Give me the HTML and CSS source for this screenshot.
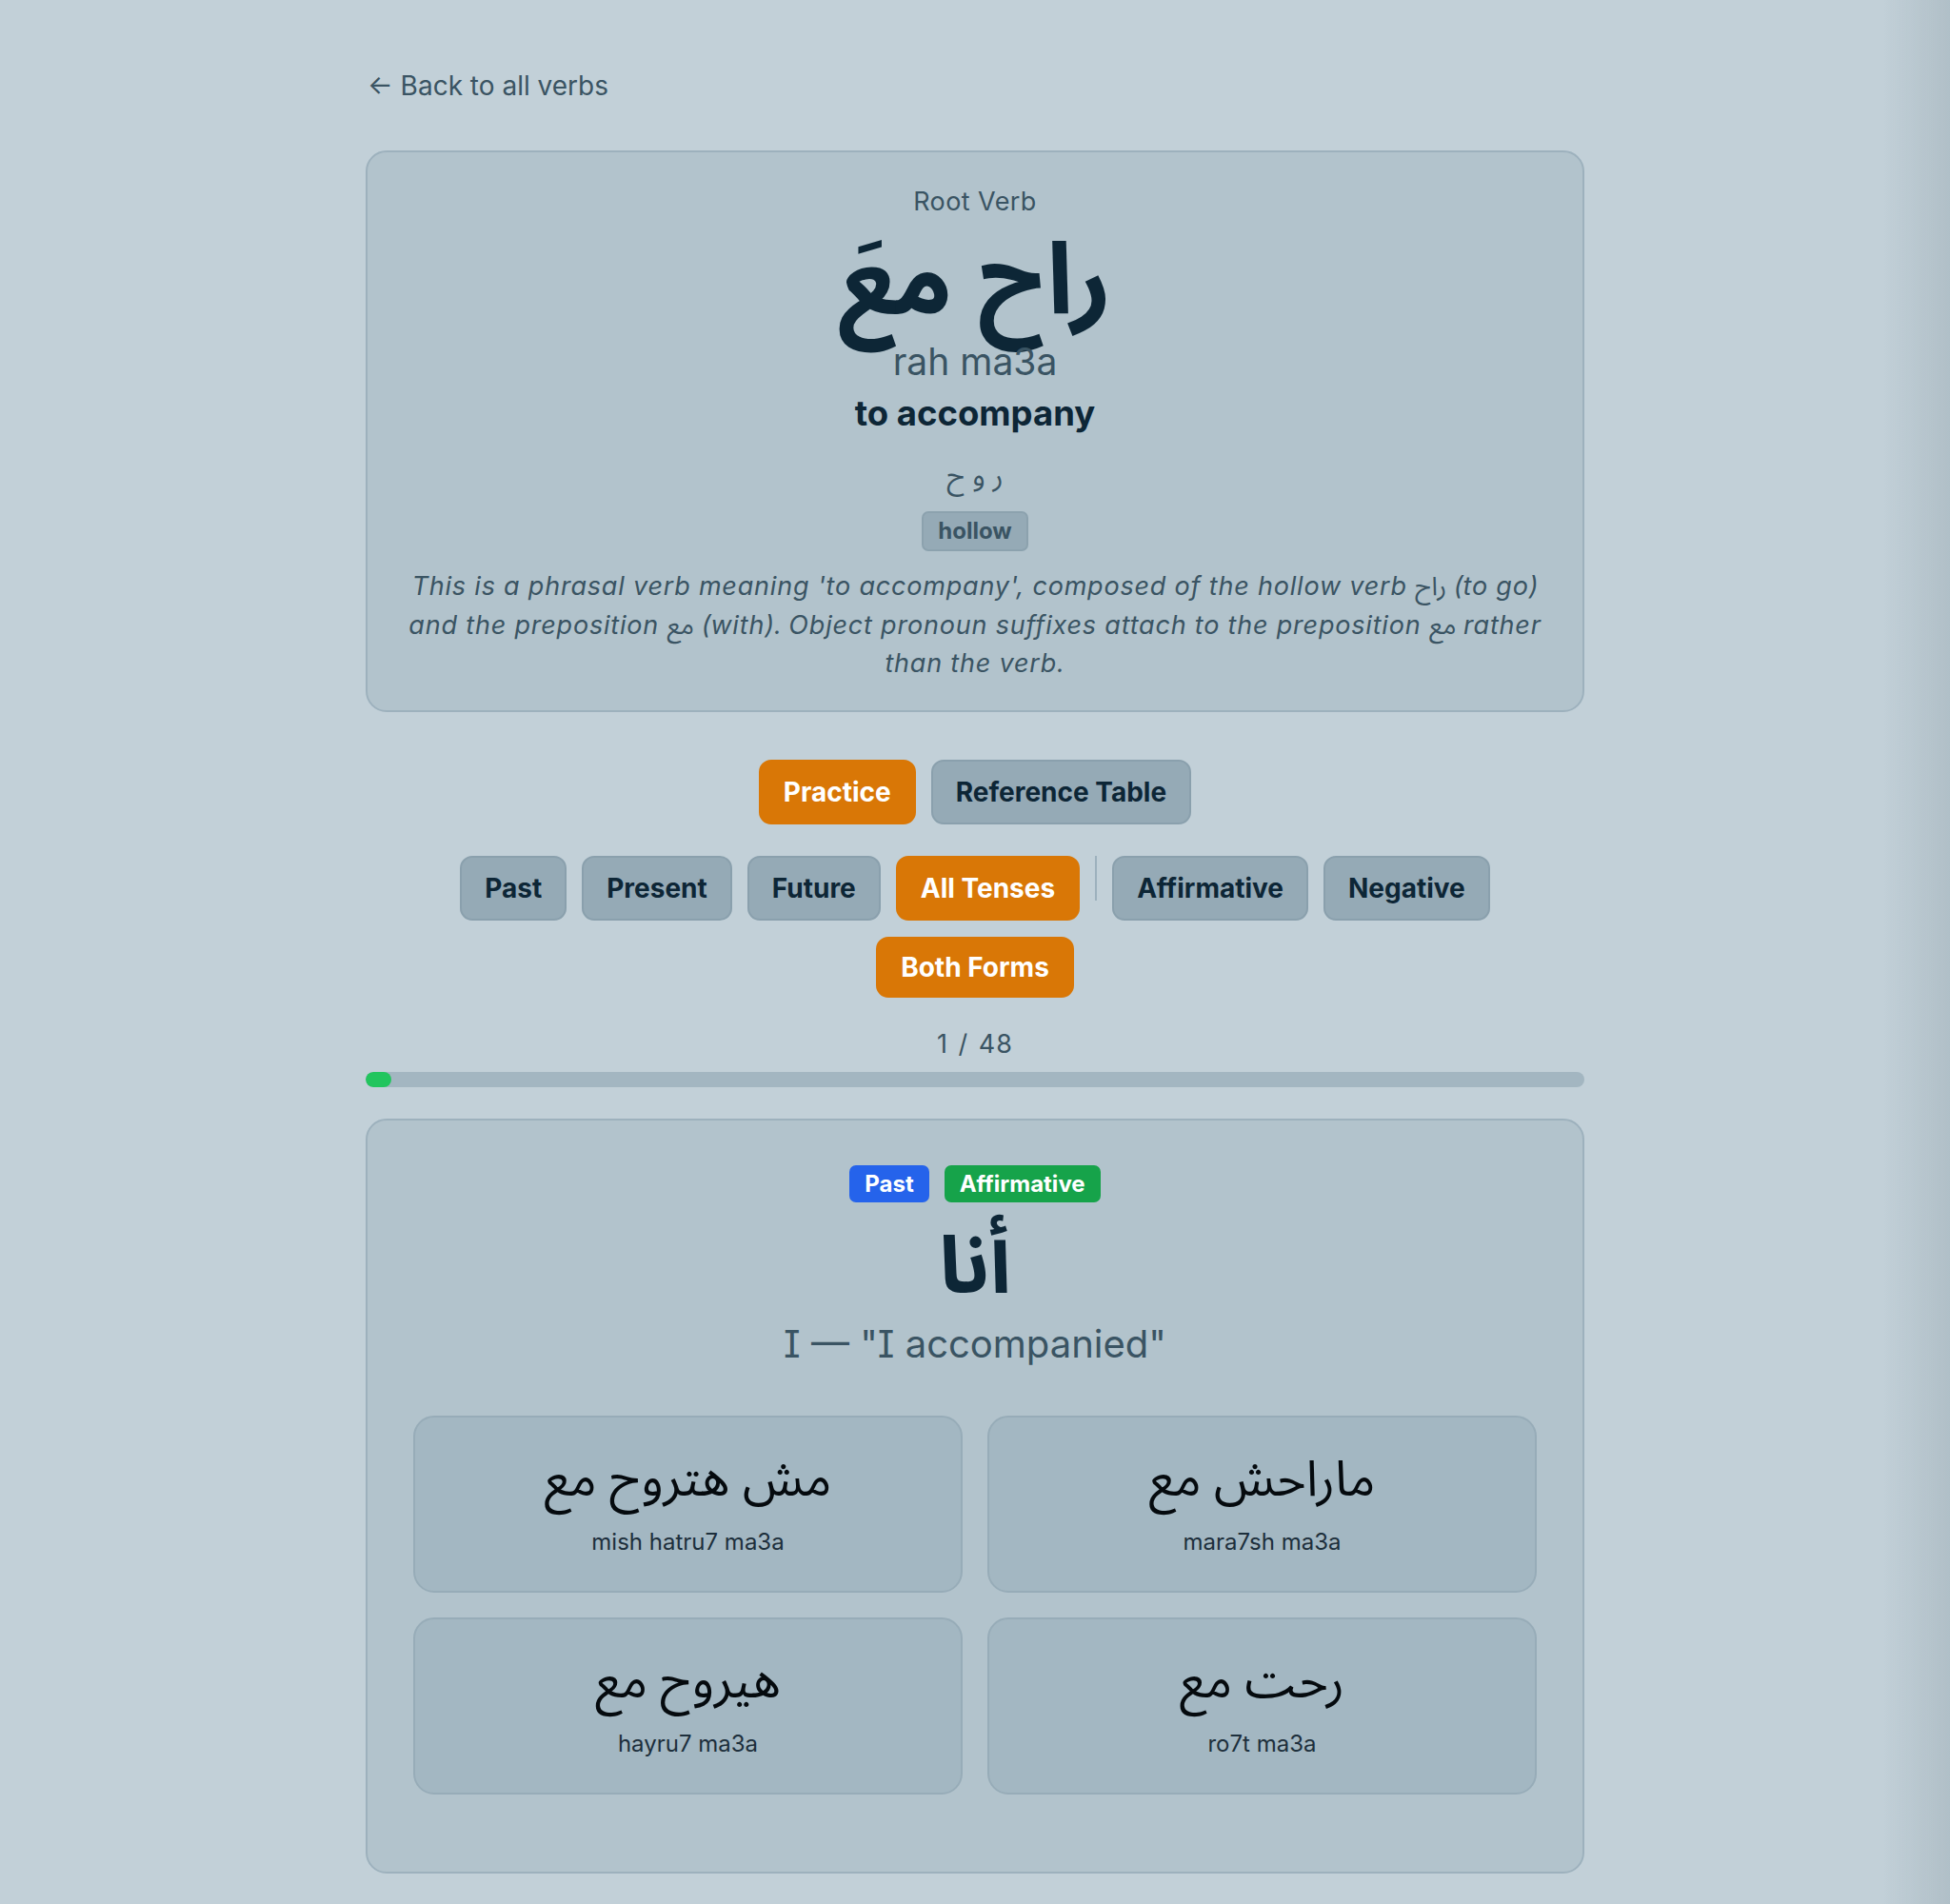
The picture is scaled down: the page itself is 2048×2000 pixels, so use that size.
FILE: index.html
```html
<!DOCTYPE html>
<html lang="en">
<head>
<meta charset="utf-8">
<title>راح مع — to accompany</title>
<link rel="stylesheet" href="styles.css">
</head>
<body>
<div class="edge-shade"></div>
<main class="page">
  <a class="back" href="#">← Back to all verbs</a>

  <section class="card verb-card">
    <div class="eyebrow">Root Verb</div>
    <div class="verb-ar" lang="ar" dir="rtl">راح معَ</div>
    <div class="verb-translit">rah ma3a</div>
    <div class="verb-meaning">to accompany</div>
    <div class="verb-root" lang="ar" dir="rtl">ر و ح</div>
    <div class="tag-row"><span class="tag">hollow</span></div>
    <p class="note">This is a phrasal verb meaning 'to accompany', composed of the hollow verb <span lang="ar">راح</span> (to go) and the preposition <span lang="ar">مع</span> (with). Object pronoun suffixes attach to the preposition <span lang="ar">مع</span> rather than the verb.</p>
  </section>

  <nav class="btn-row mode-row">
    <button class="btn active">Practice</button>
    <button class="btn">Reference Table</button>
  </nav>

  <div class="btn-row filter-row">
    <button class="btn">Past</button>
    <button class="btn">Present</button>
    <button class="btn">Future</button>
    <button class="btn active">All Tenses</button>
    <span class="divider"></span>
    <button class="btn">Affirmative</button>
    <button class="btn">Negative</button>
  </div>
  <div class="btn-row forms-row">
    <button class="btn active slim">Both Forms</button>
  </div>

  <div class="counter">1 / 48</div>
  <div class="progress"><div class="progress-fill" style="width: 2.08%"></div></div>

  <section class="card quiz-card">
    <div class="badges">
      <span class="badge past">Past</span>
      <span class="badge affirm">Affirmative</span>
    </div>
    <div class="pronoun" lang="ar" dir="rtl">أنا</div>
    <div class="prompt">I — "I accompanied"</div>
    <div class="options">
      <button class="option"><span class="opt-ar" lang="ar" dir="rtl">مش هتروح مع</span><span class="opt-tr">mish hatru7 ma3a</span></button>
      <button class="option"><span class="opt-ar" lang="ar" dir="rtl">ماراحش مع</span><span class="opt-tr">mara7sh ma3a</span></button>
      <button class="option"><span class="opt-ar" lang="ar" dir="rtl">هيروح مع</span><span class="opt-tr">hayru7 ma3a</span></button>
      <button class="option"><span class="opt-ar" lang="ar" dir="rtl">رحت مع</span><span class="opt-tr">ro7t ma3a</span></button>
    </div>
  </section>
</main>
</body>
</html>
```

FILE: styles.css
```css
* { box-sizing: border-box; }

html, body {
  margin: 0;
  padding: 0;
}

body {
  background: #c2d0d8;
  font-family: "Inter", "Noto Sans", "Noto Sans Arabic", "DejaVu Sans", sans-serif;
  color: #0d2636;
  min-height: 2000px;
}

.edge-shade {
  position: fixed;
  top: 0;
  right: 0;
  width: 70px;
  height: 100%;
  background: linear-gradient(to right, rgba(60, 80, 90, 0), rgba(60, 80, 90, 0.13));
  pointer-events: none;
}

.page {
  width: 1280px;
  margin: 0 auto;
  padding-top: 69px;
  display: flex;
  flex-direction: column;
}

.back {
  align-self: flex-start;
  font-size: 28px;
  line-height: 42px;
  color: #3a5463;
  text-decoration: none;
  margin-left: 2px;
}

.card {
  background: #b2c3cc;
  border: 2px solid #9db1bd;
  border-radius: 22px;
  text-align: center;
}

.verb-card {
  margin-top: 47px;
  padding: 32px 32px 26px;
  height: 590px;
}

.eyebrow {
  font-size: 27px;
  letter-spacing: 0.4px;
  line-height: 40px;
  color: #3a5463;
}

.verb-ar {
  font-family: "Noto Sans Arabic", "Noto Sans", "DejaVu Sans", sans-serif;
  font-size: 104px;
  font-weight: 700;
  line-height: 128px;
  color: #0d2636;
}

.verb-translit {
  font-size: 39px;
  line-height: 40px;
  color: #3a5463;
}

.verb-meaning {
  font-size: 36.5px;
  font-weight: 700;
  line-height: 44px;
  margin-top: 12px;
  color: #0d2636;
}

.verb-root {
  font-family: "Noto Sans Arabic", "Noto Sans", "DejaVu Sans", sans-serif;
  font-size: 30px;
  line-height: 40px;
  margin-top: 25px;
  color: #3a5463;
}

.tag-row {
  margin-top: 16px;
  display: flex;
  justify-content: center;
}

.tag {
  display: inline-block;
  background: #95aab6;
  border: 2px solid #8ca2ae;
  border-radius: 7px;
  padding: 0 15px;
  font-size: 24px;
  font-weight: 700;
  line-height: 38px;
  color: #3a5463;
}

.note {
  margin: 17px 0 0;
  font-size: 27px;
  letter-spacing: 0.8px;
  line-height: 39.5px;
  font-style: italic;
  color: #3a5463;
}

.note span {
  font-style: normal;
  letter-spacing: 0;
  font-family: "Noto Sans Arabic", "DejaVu Sans", sans-serif;
}

.btn-row {
  display: flex;
  justify-content: center;
  align-items: center;
  gap: 16px;
}

.mode-row {
  margin-top: 50px;
  gap: 16px;
}

.filter-row {
  margin-top: 33px;
}

.forms-row {
  margin-top: 17px;
}

.btn {
  font-family: inherit;
  font-size: 28px;
  font-weight: 700;
  line-height: 40px;
  padding: 12px 24px;
  border-radius: 13px;
  border: 2px solid #8aa0ad;
  background: #95aab6;
  color: #0d2636;
  cursor: pointer;
}

.btn.active {
  background: #d97706;
  border-color: #d97706;
  color: #ffffff;
}

.btn.slim {
  padding-top: 10px;
  padding-bottom: 10px;
}

.divider {
  width: 2px;
  height: 47px;
  background: #9db1bd;
  align-self: flex-start;
}

.counter {
  margin-top: 29px;
  text-align: center;
  font-size: 27px;
  letter-spacing: 1px;
  word-spacing: 2px;
  line-height: 40px;
  color: #3a5463;
}

.progress {
  margin-top: 9px;
  height: 16px;
  border-radius: 8px;
  background: #a3b6c1;
  overflow: hidden;
}

.progress-fill {
  height: 100%;
  background: #22c55e;
  border-radius: 8px;
}

.quiz-card {
  margin-top: 33px;
  padding: 47px 48px 81px;
}

.badges {
  display: flex;
  justify-content: center;
  gap: 16px;
}

.badge {
  font-size: 24px;
  font-weight: 700;
  line-height: 31px;
  padding: 4px 16px;
  border-radius: 7px;
  color: #ffffff;
}

.badge.past { background: #2563eb; }
.badge.affirm { background: #16a34a; }

.pronoun {
  font-family: "Noto Sans Arabic", "Noto Sans", "DejaVu Sans", sans-serif;
  font-size: 84px;
  font-weight: 700;
  line-height: 100px;
  margin-top: 19px;
  color: #0d2636;
}

.prompt {
  font-size: 40px;
  line-height: 52px;
  color: #3a5463;
  margin-top: 4px;
  font-feature-settings: "cv08" 1;
}

.options {
  margin-top: 49px;
  display: grid;
  grid-template-columns: 1fr 1fr;
  gap: 26px;
}

.option {
  font-family: inherit;
  display: flex;
  flex-direction: column;
  align-items: center;
  height: 186px;
  padding: 30px 16px 30px;
  background: #a3b7c2;
  border: 2px solid #97acb8;
  border-radius: 22px;
  cursor: pointer;
}

.opt-ar {
  font-family: "Noto Sans Arabic", "Noto Naskh Arabic", "DejaVu Sans", sans-serif;
  font-size: 52px;
  line-height: 72px;
  color: #050a0e;
}

.opt-tr {
  margin-top: 12px;
  font-size: 24px;
  line-height: 34px;
  color: #1d2f3c;
}
```
